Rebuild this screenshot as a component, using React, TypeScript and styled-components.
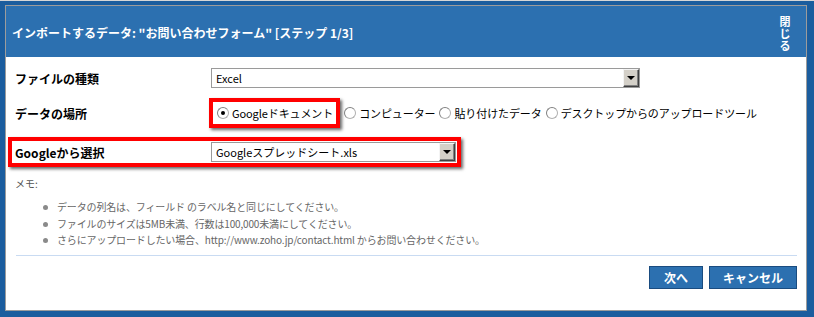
import React from 'react'
import styled, { createGlobalStyle } from 'styled-components'

const GlobalStyle = createGlobalStyle`
	html, body {
		margin: 0;
		padding: 0;
	}
	body {
		width: 814px;
		height: 317px;
		overflow: hidden;
		background: #1b5d9e;
		font-family: "Noto Sans CJK JP", "Noto Sans", sans-serif;
	}
`

const Backdrop = styled.div`
	width: 814px;
	height: 317px;
	box-sizing: border-box;
	border-top: 1px solid #d6d6d6;
	padding: 4px 7px 0 5px;
	background: #1b5d9e;
`
const Dialog = styled.div`
	width: 802px;
	height: 306px;
	box-sizing: border-box;
	border: 1px solid #9c9c9c;
	background: #fff;
	display: flex;
	flex-direction: column;
`
const Header = styled.div`
	height: 51px;
	flex: 0 0 auto;
	display: flex;
	justify-content: space-between;
	align-items: flex-start;
	padding: 0 15px 0 6px;
	background: #2c70b0;
	color: #fff;
`
const Title = styled.h1`
	margin: 18px 0 0 0;
	font-size: 12px;
	line-height: 17px;
	font-weight: bold;
`
const Close = styled.div`
	margin-top: 9px;
	width: 12px;
	font-size: 11px;
	line-height: 12px;
	font-weight: bold;
	text-align: center;
	word-break: break-all;
	cursor: pointer;
`
const Body = styled.div`
	flex: 1 1 auto;
	display: flex;
	flex-direction: column;
	padding: 11px 9px 0 9px;
`
const Row = styled.div<{ highlight?: boolean; gap: number }>`
	display: grid;
	grid-template-columns: 196px auto;
	align-items: center;
	width: fit-content;
	margin-bottom: ${(p) => p.gap}px;
	${(p) =>
		p.highlight &&
		`
		margin-left: -7px;
		border: 4px solid #f00;
		padding: 1px 1px 1px 3px;
		box-shadow: 2px 2px 3px rgba(0, 0, 0, 0.6);
	`}
`
const Label = styled.div`
	font-size: 12px;
	font-weight: bold;
	color: #000;
`
const SelectBox = styled.div<{ width: number }>`
	width: ${(p) => p.width}px;
	height: 20px;
	box-sizing: border-box;
	border: 1px solid #9a9a9a;
	display: flex;
	align-items: center;
	background: #fff;
`
const SelectText = styled.span`
	flex: 1 1 auto;
	padding-left: 4px;
	font-size: 11px;
	color: #000;
`
const ArrowButton = styled.span`
	width: 16px;
	height: 18px;
	box-sizing: border-box;
	display: flex;
	align-items: center;
	justify-content: center;
	background: #d4d0c8;
	border: 1px solid;
	border-color: #f4f4f4 #404040 #404040 #f4f4f4;
	box-shadow: inset -1px -1px 0 #808080;
	&::after {
		content: '';
		border-left: 4px solid transparent;
		border-right: 4px solid transparent;
		border-top: 4px solid #000;
	}
`
const RadioGroup = styled.div`
	display: flex;
	align-items: center;
	gap: 4px;
	height: 30px;
`
const Focus = styled.div`
	margin-left: -2px;
	height: 30px;
	box-sizing: border-box;
	border: 4px solid #f00;
	padding: 0 3px 0 4px;
	display: flex;
	align-items: center;
	box-shadow: 2px 2px 3px rgba(0, 0, 0, 0.6);
`
const RadioItem = styled.label`
	display: flex;
	align-items: center;
	gap: 3px;
	font-size: 11px;
	letter-spacing: -0.1px;
	color: #000;
	white-space: nowrap;
`
const RadioDot = styled.span<{ checked?: boolean }>`
	width: 12px;
	height: 12px;
	box-sizing: border-box;
	border-radius: 50%;
	border: 1px solid #b0b0b0;
	border-top-color: #808080;
	border-left-color: #808080;
	background: #fff;
	display: flex;
	align-items: center;
	justify-content: center;
	&::after {
		content: '';
		width: 4px;
		height: 4px;
		border-radius: 50%;
		background: ${(p) => (p.checked ? '#000' : 'transparent')};
	}
`
const MemoTitle = styled.div`
	margin-top: 10px;
	font-size: 10px;
	line-height: 14px;
	color: #555;
`
const MemoList = styled.ul`
	margin: 8px 0 0 0;
	padding-left: 42px;
	list-style: none;
	font-size: 10px;
	line-height: 16.5px;
	letter-spacing: -0.15px;
	color: #666;
`
const MemoItem = styled.li`
	position: relative;
	&::before {
		content: '';
		position: absolute;
		left: -14px;
		top: 6px;
		width: 5px;
		height: 5px;
		border-radius: 50%;
		background: #8a8a8a;
	}
`
const Footer = styled.div`
	margin: auto 0 0 1px;
	border-top: 1px solid #c9dbf2;
	padding: 10px 0 21px 0;
	display: flex;
	justify-content: flex-end;
	gap: 6px;
`
const Button = styled.button<{ width: number }>`
	width: ${(p) => p.width}px;
	height: 23px;
	padding: 0;
	border: 1px solid #1a4c80;
	background: #2c70b0;
	color: #fff;
	font-family: inherit;
	font-size: 12px;
	font-weight: bold;
	cursor: pointer;
`

const Select = ({ value, width }: { value: string; width: number }) => (
	<SelectBox width={width}>
		<SelectText>{value}</SelectText>
		<ArrowButton />
	</SelectBox>
)

const Radio = ({ text, checked }: { text: string; checked?: boolean }) => (
	<RadioItem>
		<RadioDot checked={checked} />
		{text}
	</RadioItem>
)

const notes = [
	'データの列名は、フィールド のラベル名と同じにしてください。',
	'ファイルのサイズは5MB未満、行数は100,000未満にしてください。',
	'さらにアップロードしたい場合、http://www.zoho.jp/contact.html からお問い合わせください。',
]

const App = () => (
	<Backdrop>
		<GlobalStyle />
		<Dialog>
			<Header>
				<Title>インポートするデータ: "お問い合わせフォーム" [ステップ 1/3]</Title>
				<Close>閉じる</Close>
			</Header>
			<Body>
				<Row gap={10}>
					<Label>ファイルの種類</Label>
					<Select value="Excel" width={429} />
				</Row>
				<Row gap={9}>
					<Label>データの場所</Label>
					<RadioGroup>
						<Focus>
							<Radio text="Googleドキュメント" checked />
						</Focus>
						<Radio text="コンピューター" />
						<Radio text="貼り付けたデータ" />
						<Radio text="デスクトップからのアップロードツール" />
					</RadioGroup>
				</Row>
				<Row gap={0} highlight>
					<Label>Googleから選択</Label>
					<Select value="Googleスプレッドシート.xls" width={245} />
				</Row>
				<MemoTitle>メモ:</MemoTitle>
				<MemoList>
					{notes.map((n) => (
						<MemoItem key={n}>{n}</MemoItem>
					))}
				</MemoList>
				<Footer>
					<Button width={54}>次へ</Button>
					<Button width={88}>キャンセル</Button>
				</Footer>
			</Body>
		</Dialog>
	</Backdrop>
)

export default App
